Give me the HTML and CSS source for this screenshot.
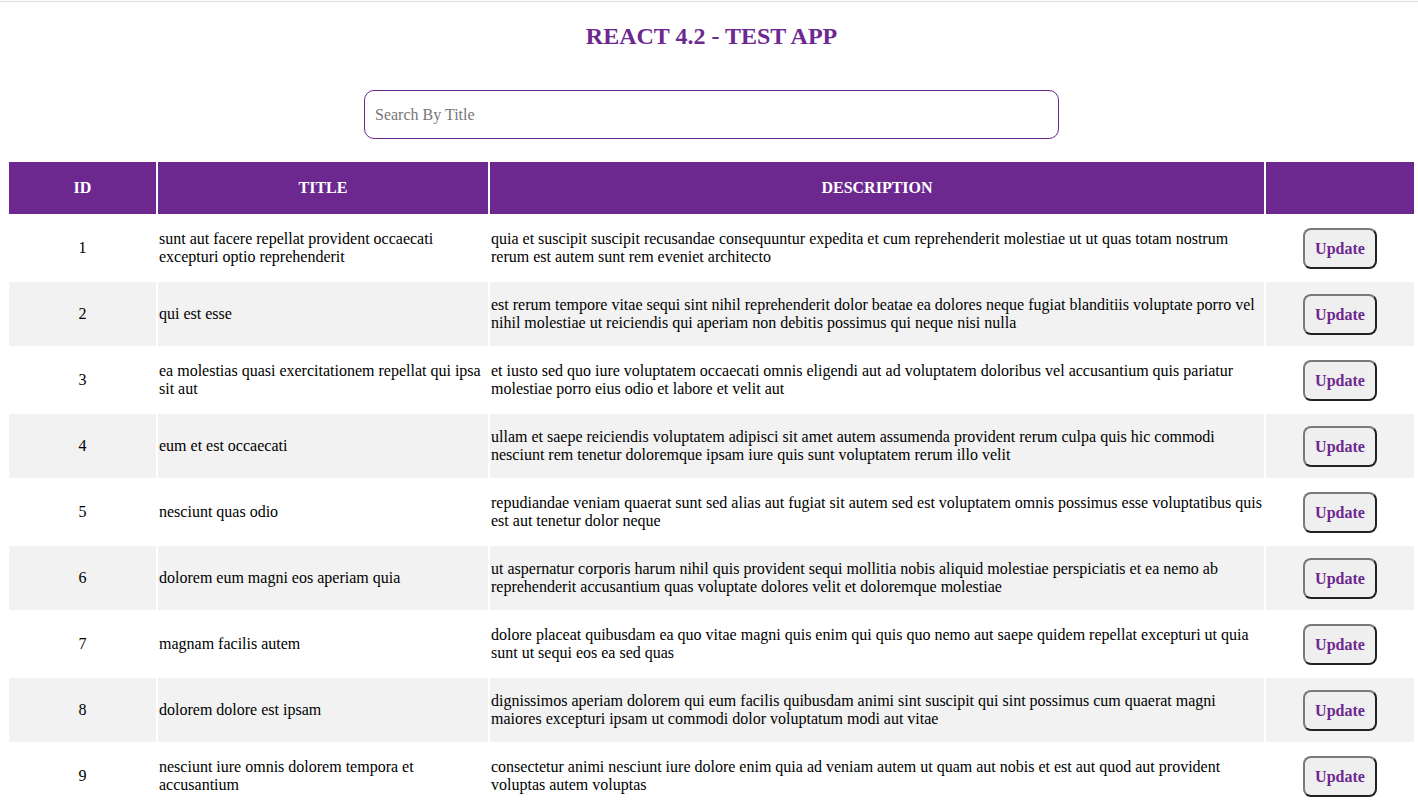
FILE: index.html
```html
<!DOCTYPE html>
<html>
<head>
<meta charset="utf-8">
<link rel="stylesheet" href="styles.css">
</head>
<body>
<div class="topline"></div>
<h1 class="title">REACT 4.2 - TEST APP</h1>
<div class="search-row">
  <input class="search" type="text" placeholder="Search By Title">
</div>
<table class="posts">
  <thead>
    <tr>
      <th class="c-id">ID</th>
      <th class="c-title">TITLE</th>
      <th class="c-desc">DESCRIPTION</th>
      <th class="c-act"></th>
    </tr>
  </thead>
  <tbody>
    <tr><td class="id">1</td><td>sunt aut facere repellat provident occaecati excepturi optio reprehenderit</td><td>quia et suscipit suscipit recusandae consequuntur expedita et cum reprehenderit molestiae ut ut quas totam nostrum rerum est autem sunt rem eveniet architecto</td><td class="act"><button class="btn">Update</button></td></tr>
    <tr><td class="id">2</td><td>qui est esse</td><td>est rerum tempore vitae sequi sint nihil reprehenderit dolor beatae ea dolores neque fugiat blanditiis voluptate porro vel nihil molestiae ut reiciendis qui aperiam non debitis possimus qui neque nisi nulla</td><td class="act"><button class="btn">Update</button></td></tr>
    <tr><td class="id">3</td><td>ea molestias quasi exercitationem repellat qui ipsa sit aut</td><td>et iusto sed quo iure voluptatem occaecati omnis eligendi aut ad voluptatem doloribus vel accusantium quis pariatur molestiae porro eius odio et labore et velit aut</td><td class="act"><button class="btn">Update</button></td></tr>
    <tr><td class="id">4</td><td>eum et est occaecati</td><td>ullam et saepe reiciendis voluptatem adipisci sit amet autem assumenda provident rerum culpa quis hic commodi nesciunt rem tenetur doloremque ipsam iure quis sunt voluptatem rerum illo velit</td><td class="act"><button class="btn">Update</button></td></tr>
    <tr><td class="id">5</td><td>nesciunt quas odio</td><td>repudiandae veniam quaerat sunt sed alias aut fugiat sit autem sed est voluptatem omnis possimus esse voluptatibus quis est aut tenetur dolor neque</td><td class="act"><button class="btn">Update</button></td></tr>
    <tr><td class="id">6</td><td>dolorem eum magni eos aperiam quia</td><td>ut aspernatur corporis harum nihil quis provident sequi mollitia nobis aliquid molestiae perspiciatis et ea nemo ab reprehenderit accusantium quas voluptate dolores velit et doloremque molestiae</td><td class="act"><button class="btn">Update</button></td></tr>
    <tr><td class="id">7</td><td>magnam facilis autem</td><td>dolore placeat quibusdam ea quo vitae magni quis enim qui quis quo nemo aut saepe quidem repellat excepturi ut quia sunt ut sequi eos ea sed quas</td><td class="act"><button class="btn">Update</button></td></tr>
    <tr><td class="id">8</td><td>dolorem dolore est ipsam</td><td>dignissimos aperiam dolorem qui eum facilis quibusdam animi sint suscipit qui sint possimus cum quaerat magni maiores excepturi ipsam ut commodi dolor voluptatum modi aut vitae</td><td class="act"><button class="btn">Update</button></td></tr>
    <tr><td class="id">9</td><td>nesciunt iure omnis dolorem tempora et accusantium</td><td>consectetur animi nesciunt iure dolore enim quia ad veniam autem ut quam aut nobis et est aut quod aut provident voluptas autem voluptas</td><td class="act"><button class="btn">Update</button></td></tr>
    <tr><td class="id">10</td><td>optio molestias id quia eum</td><td>quo et expedita modi cum officia vel magni doloribus qui repudiandae vero nisi sit quos veniam quod sed accusamus veritatis error</td><td class="act"><button class="btn">Update</button></td></tr>
  </tbody>
</table>
</body>
</html>
```
FILE: styles.css
```css
html, body {
  margin: 0;
  padding: 0;
  background: #ffffff;
}
body {
  font-family: "Liberation Serif", "Times New Roman", serif;
  font-size: 16px;
  color: #000;
  padding: 0 2px 0 7px;
}
.topline {
  margin: 1px -2px 0 -7px;
  height: 1px;
  background: #dcdcdc;
}
.title {
  margin: 20px 0 0;
  text-align: center;
  font-size: 24px;
  font-weight: bold;
  color: #6d2890;
  line-height: 28px;
}
.search-row {
  display: flex;
  justify-content: center;
  margin-top: 40px;
}
.search {
  width: 695px;
  height: 49px;
  box-sizing: border-box;
  border: 1px solid #6d2890;
  border-radius: 10px;
  padding: 0 10px;
  font-family: "Liberation Serif", "Times New Roman", serif;
  font-size: 16px;
  outline: none;
}
.search::placeholder {
  color: #777;
}
.posts {
  width: 100%;
  margin-top: 21px;
  border-spacing: 2px;
  border-collapse: separate;
}
.posts th {
  background: #6d2890;
  color: #fff;
  font-weight: bold;
  font-size: 16px;
  padding: 17px 1px;
  line-height: 18px;
  text-align: center;
}
.c-id { width: 145px; }
.c-title { width: 328px; }
.c-act { width: 146px; }
.posts td {
  height: 62px;
  padding: 1px;
  vertical-align: middle;
  text-align: left;
  line-height: 18px;
}
.posts tbody tr:nth-child(even) td {
  background: #f2f2f2;
}
.posts td.id {
  text-align: center;
}
.posts td.act {
  text-align: center;
}
.btn {
  font-family: "Liberation Serif", "Times New Roman", serif;
  font-size: 16px;
  font-weight: bold;
  color: #6d2890;
  background: #efefef;
  border: 2px solid;
  border-color: #7a7a7a #222 #222 #7a7a7a;
  border-radius: 8px;
  padding: 10px 10px 9px;
  line-height: 18px;
  cursor: pointer;
}
```
